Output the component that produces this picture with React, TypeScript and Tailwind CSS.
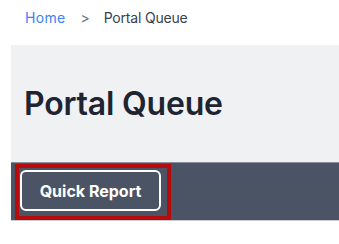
export default function App() {
  return (
    <div className="h-[244px] w-[339px] overflow-hidden bg-white font-['Inter',sans-serif]">
      <nav className="flex h-[35px] items-center pl-[25px] text-[14px]">
        <span className="tracking-[0.3px] text-[#3b82f6]">Home</span>
        <span className="ml-[15px] text-[#6b7280]">&gt;</span>
        <span className="ml-[14px] tracking-[-0.2px] text-[#374151]">Portal Queue</span>
      </nav>
      <div className="mt-[10px] ml-[11px]">
        <div className="flex h-[117px] items-center bg-[#f0f1f3] pl-[13px]">
          <h1 className="text-[32px] font-semibold tracking-[-0.2px] text-[#1e2432]">Portal Queue</h1>
        </div>
        <div className="h-[59px] border-t border-b border-t-[#8a909b] border-b-[#c9ccd1] bg-[#4b5464] pl-[4px] pt-[1px]">
          <div className="inline-block border-4 border-[#b70b0b] pt-[2px] pr-[6px] pb-[5px] pl-px">
            <button
              type="button"
              className="flex h-[41px] w-[141px] items-center justify-center rounded-[6px] border-2 border-white text-[16px] font-bold text-white"
            >
              Quick Report
            </button>
          </div>
        </div>
      </div>
    </div>
  );
}
